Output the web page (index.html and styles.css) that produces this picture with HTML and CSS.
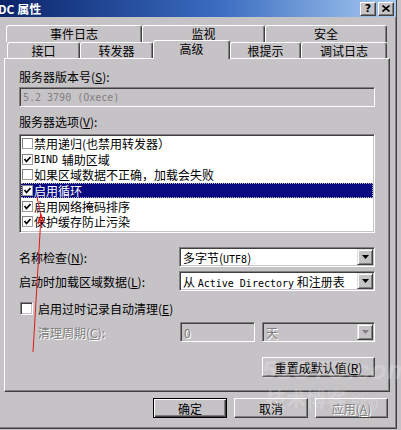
FILE: index.html
```html
<!DOCTYPE html>
<html lang="zh-CN">
<head>
    <meta charset="UTF-8">
    <title>DC 属性</title>
    <link rel="stylesheet" href="styles.css">
</head>
<body>
    <div class="dialog">
        <div class="titlebar">
            <span class="title">DC 属性</span>
            <div class="title-buttons">
                <span class="tbtn">?</span>
                <span class="tbtn">
                    <svg width="8" height="7" viewBox="0 0 8 7"><path d="M0.5 0.5 L7.5 6.5 M7.5 0.5 L0.5 6.5" stroke="#000" stroke-width="1.6"/></svg>
                </span>
            </div>
        </div>

        <!-- Tabs -->
        <div class="tabs">
            <div class="tab-row back">
                <div class="tab t-event">事件日志</div>
                <div class="tab t-monitor">监视</div>
                <div class="tab t-security">安全</div>
            </div>
            <div class="tab-row front">
                <div class="tab t-iface">接口</div>
                <div class="tab t-forward">转发器</div>
                <div class="tab t-advanced active">高级</div>
                <div class="tab t-roothint">根提示</div>
                <div class="tab t-debug">调试日志</div>
            </div>
        </div>

        <div class="panel">
            <div class="label">服务器版本号(<u>S</u>):</div>
            <div class="edit readonly"><span class="mono">5.2 3790 (Oxece)</span></div>

            <div class="label label-gap">服务器选项(<u>V</u>):</div>
            <div class="listbox">
                <div class="item"><span class="lcheck"></span>禁用递归(也禁用转发器）</div>
                <div class="item"><span class="lcheck"><svg width="7" height="7" viewBox="0 0 7 7"><path d="M0.5 3 L2.5 5.5 L6.5 1" fill="none" stroke="#000" stroke-width="1.7"/></svg></span><span class="mono">BIND</span>&nbsp;辅助区域</div>
                <div class="item"><span class="lcheck"></span>如果区域数据不正确，加载会失败</div>
                <div class="item selected"><span class="lcheck"><svg width="7" height="7" viewBox="0 0 7 7"><path d="M0.5 3 L2.5 5.5 L6.5 1" fill="none" stroke="#000" stroke-width="1.7"/></svg></span>启用循环</div>
                <div class="item"><span class="lcheck"><svg width="7" height="7" viewBox="0 0 7 7"><path d="M0.5 3 L2.5 5.5 L6.5 1" fill="none" stroke="#000" stroke-width="1.7"/></svg></span>启用网络掩码排序</div>
                <div class="item"><span class="lcheck"><svg width="7" height="7" viewBox="0 0 7 7"><path d="M0.5 3 L2.5 5.5 L6.5 1" fill="none" stroke="#000" stroke-width="1.7"/></svg></span>保护缓存防止污染</div>
            </div>

            <div class="field field-first">
                <span>名称检查(<u>N</u>):</span>
                <div class="combo">
                    <span>多字节(<span class="mono">UTF8</span>)</span>
                    <span class="drop"><svg width="7" height="4" viewBox="0 0 7 4"><path d="M0 0 H7 L3.5 4 Z" fill="#000"/></svg></span>
                </div>
            </div>
            <div class="field field-next">
                <span>启动时加载区域数据(<u>L</u>):</span>
                <div class="combo">
                    <span>从 <span class="mono">Active Directory</span> 和注册表</span>
                    <span class="drop"><svg width="7" height="4" viewBox="0 0 7 4"><path d="M0 0 H7 L3.5 4 Z" fill="#000"/></svg></span>
                </div>
            </div>

            <div class="check-row">
                <span class="check"></span>
                <span>启用过时记录自动清理(<u>E</u>)</span>
            </div>

            <div class="field field-scav">
                <span class="disabled">清理周期(<u>C</u>):</span>
                <div class="edit small-edit"><span class="disabled">0</span></div>
                <div class="combo combo-small off">
                    <span class="disabled">天</span>
                    <span class="drop"><svg width="7" height="4" viewBox="0 0 7 4"><path d="M0 0 H7 L3.5 4 Z" fill="#808080"/></svg></span>
                </div>
            </div>

            <div class="btn reset">重置成默认值(<u>R</u>)</div>
        </div>

        <div class="footer">
            <div class="btn default">确定</div>
            <div class="btn">取消</div>
            <div class="btn"><span class="disabled">应用(<u>A</u>)</span></div>
        </div>

        <!-- red annotation arrow drawn on top of the screenshot -->
        <svg class="annotation" width="401" height="430" viewBox="0 0 401 430">
            <path d="M33 352 L41 216 L37 197" fill="none" stroke="#e01818" stroke-width="1"/>
            <path d="M38 224 L41 215 L44 223" fill="none" stroke="#e01818" stroke-width="1.4"/>
        </svg>

        <div class="watermark">
            <div class="wm-big">51CTO.com</div>
            <div class="wm-small">技术博客 <i>Blog</i></div>
        </div>
    </div>
</body>
</html>
```

FILE: styles.css
```css
* {
    margin: 0;
    padding: 0;
    box-sizing: border-box;
}

body {
    width: 401px;
    height: 430px;
    overflow: hidden;
    background: #c6c3c6;
    font-family: "Noto Sans CJK SC", sans-serif;
    font-size: 12px;
    color: #000;
}

u {
    text-decoration-thickness: 1px;
    text-underline-offset: 1px;
}

.mono {
    font-family: "DejaVu Sans Mono", monospace;
    font-size: 10px;
}

.disabled {
    color: #808080;
    text-shadow: 1px 1px 0 #fff;
}

.dialog {
    position: relative;
    width: 397px;
    height: 429px;
    background: #c6c3c6;
    border-right: 1px solid #404040;
    border-bottom: 1px solid #404040;
    box-shadow: inset -1px -1px #808080;
}

/* Title bar */
.titlebar {
    height: 17px;
    display: flex;
    align-items: center;
    justify-content: space-between;
    padding-right: 2px;
    background: linear-gradient(90deg, #0a246a 0%, #3a6cc0 55%, #a6caf0 100%);
}

.title {
    color: #fff;
    font-weight: bold;
    line-height: 17px;
    margin-left: -2px;
}

.title-buttons {
    display: flex;
    gap: 2px;
}

.tbtn {
    width: 16px;
    height: 14px;
    display: flex;
    align-items: center;
    justify-content: center;
    background: #c6c3c6;
    border: 1px solid;
    border-color: #fff #404040 #404040 #fff;
    box-shadow: inset -1px -1px #808080;
    font: bold 11px "DejaVu Sans", sans-serif;
}

/* Tabs */
.tabs {
    margin: 8px 0 0 6px;
}

.tab-row {
    display: flex;
}

.tab-row.back {
    height: 17px;
}

.tab-row.front {
    height: 18px;
    margin-top: -2px;
    margin-left: 1px;
    align-items: flex-end;
}

.tab {
    height: 100%;
    display: flex;
    align-items: center;
    justify-content: center;
    background: #c6c3c6;
    border-top: 1px solid #fff;
    border-left: 1px solid #fff;
    border-right: 1px solid #404040;
    border-radius: 3px 3px 0 0;
    box-shadow: inset -1px 0 #808080;
    line-height: 14px;
}

.front .tab {
    height: 16px;
}

.front .tab.active {
    position: relative;
    z-index: 1;
    height: 19px;
    margin-bottom: -1px;
    padding-bottom: 2px;
}

.t-event { width: 136px; }
.t-monitor { width: 123px; }
.t-security { width: 122px; }
.t-iface { width: 73px; }
.t-forward { width: 73px; }
.t-advanced { width: 77px; }
.t-roothint { width: 71px; }
.t-debug { width: 86px; }

/* Tab page */
.panel {
    margin-left: 4px;
    width: 386px;
    height: 334px;
    display: flex;
    flex-direction: column;
    padding: 11px 14px 0 14px;
    border: 1px solid;
    border-color: #fff #404040 #404040 #fff;
    box-shadow: inset -1px -1px #808080;
}

.label {
    height: 14px;
    line-height: 14px;
}

.label-gap {
    margin-top: 8px;
}

.edit {
    height: 20px;
    margin-top: 3px;
    display: flex;
    align-items: center;
    padding-left: 3px;
    background: #fff;
    border: 1px solid;
    border-color: #808080 #fff #fff #808080;
    box-shadow: inset 1px 1px #404040, inset -1px -1px #c6c3c6;
}

.edit.readonly {
    background: #c6c3c6;
    color: #808080;
}

.listbox {
    height: 99px;
    margin-top: 5px;
    padding: 1px;
    background: #fff;
    border: 1px solid;
    border-color: #808080 #fff #fff #808080;
    box-shadow: inset 1px 1px #404040, inset -1px -1px #c6c3c6;
}

.item {
    height: 15.6px;
    display: flex;
    align-items: center;
    gap: 1px;
    padding-left: 1px;
    white-space: nowrap;
}

.item.selected {
    background: #0a0a80;
    color: #fff;
    outline: 1px dotted #b8b8b8;
    outline-offset: -1px;
}

.lcheck {
    flex: none;
    width: 11px;
    height: 11px;
    display: flex;
    align-items: center;
    justify-content: center;
    background: #fff;
    border: 1px solid;
    border-color: #808080 #a0a0a0 #a0a0a0 #808080;
}

.field {
    height: 20px;
    display: flex;
    align-items: center;
}

.field > span:first-child {
    flex: 1;
}

.field-first {
    margin-top: 14px;
}

.field-next {
    margin-top: 4px;
}

.field-scav {
    margin-top: 7px;
    padding-left: 19px;
    gap: 7px;
}

.combo {
    width: 196px;
    height: 20px;
    display: flex;
    align-items: center;
    justify-content: space-between;
    padding: 1px 1px 1px 3px;
    background: #fff;
    border: 1px solid;
    border-color: #808080 #fff #fff #808080;
    box-shadow: inset 1px 1px #404040, inset -1px -1px #c6c3c6;
}

.combo.off {
    background: #c6c3c6;
}

.combo-small {
    width: 113px;
}

.small-edit {
    width: 75px;
    margin-top: 0;
    background: #c6c3c6;
}

.drop {
    width: 16px;
    height: 16px;
    display: flex;
    align-items: center;
    justify-content: center;
    background: #c6c3c6;
    border: 1px solid;
    border-color: #dfdfdf #404040 #404040 #dfdfdf;
    box-shadow: inset 1px 1px #fff, inset -1px -1px #808080;
}

.check-row {
    height: 14px;
    margin-top: 10px;
    display: flex;
    align-items: center;
    gap: 5px;
}

.check {
    width: 13px;
    height: 13px;
    margin-left: 1px;
    background: #fff;
    border: 1px solid;
    border-color: #808080 #fff #fff #808080;
    box-shadow: inset 1px 1px #404040, inset -1px -1px #c6c3c6;
}

/* Buttons */
.btn {
    width: 74px;
    height: 20px;
    display: flex;
    align-items: center;
    justify-content: center;
    background: #c6c3c6;
    border: 1px solid;
    border-color: #fff #404040 #404040 #fff;
    box-shadow: inset -1px -1px #808080;
}

.btn.default {
    border-color: #000;
    box-shadow: inset 1px 1px #fff, inset -1px -1px #404040, inset -2px -2px #808080;
}

.reset {
    width: 113px;
    margin-top: 15px;
    align-self: flex-end;
}

.footer {
    display: flex;
    justify-content: flex-end;
    gap: 7px;
    margin-top: 6px;
    padding-right: 8px;
}

.footer .btn:last-child {
    width: 73px;
}

/* Overlays */
.annotation {
    position: absolute;
    left: 0;
    top: 0;
    pointer-events: none;
}

.watermark {
    position: absolute;
    left: 262px;
    top: 354px;
    color: rgba(255, 255, 255, 0.2);
    pointer-events: none;
}

.wm-big {
    font: italic bold 26px "Liberation Sans", sans-serif;
    line-height: 32px;
    letter-spacing: 0.5px;
}

.wm-small {
    font-size: 20px;
    font-weight: bold;
    line-height: 26px;
    padding-left: 4px;
}

.wm-small i {
    font: italic 14px "Liberation Sans", sans-serif;
}
```
